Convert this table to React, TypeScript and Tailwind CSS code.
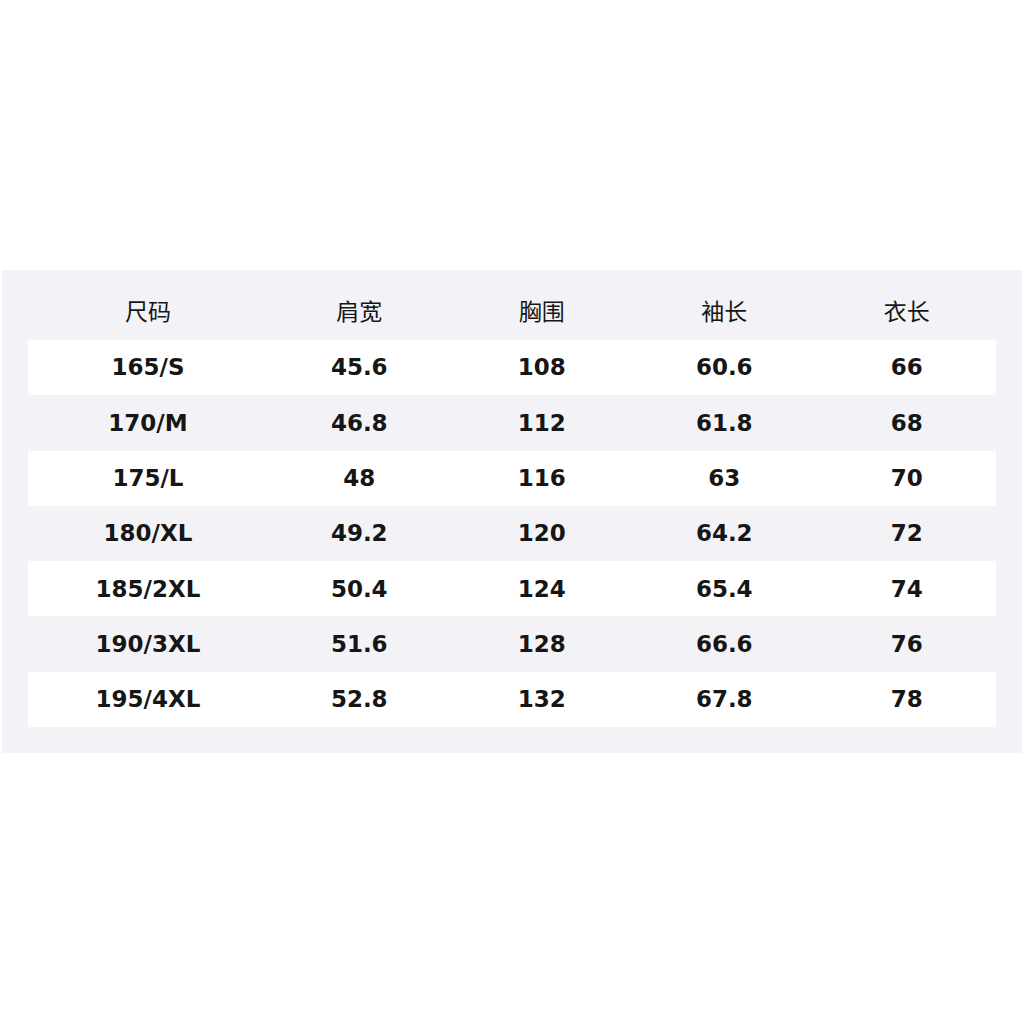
const headers = ['尺码', '肩宽', '胸围', '袖长', '衣长'];
const rows = [
  ['165/S', '45.6', '108', '60.6', '66'],
  ['170/M', '46.8', '112', '61.8', '68'],
  ['175/L', '48', '116', '63', '70'],
  ['180/XL', '49.2', '120', '64.2', '72'],
  ['185/2XL', '50.4', '124', '65.4', '74'],
  ['190/3XL', '51.6', '128', '66.6', '76'],
  ['195/4XL', '52.8', '132', '67.8', '78'],
];

export default function App() {
  return (
    <div className="flex h-[1024px] w-[1024px] flex-col bg-white pt-[270px]">
      <div className="mx-[2px] bg-[#f3f3f7] px-[26px] pb-[26px] text-[#161616]">
        <div className="grid h-[70px] grid-cols-[240px_repeat(4,182.5px)] items-center pt-[10px] font-['Noto_Sans_CJK_SC',sans-serif] text-[23px]">
          {headers.map((h) => (
            <div key={h} className="text-center">
              {h}
            </div>
          ))}
        </div>
        {rows.map((r, i) => (
          <div
            key={r[0]}
            className={`grid h-[55.3px] grid-cols-[240px_repeat(4,182.5px)] items-center font-['DejaVu_Sans',sans-serif] text-[23px] font-bold ${i % 2 === 0 ? 'bg-white' : ''}`}
          >
            {r.map((c, j) => (
              <div key={j} className="text-center">
                {c}
              </div>
            ))}
          </div>
        ))}
      </div>
    </div>
  );
}
